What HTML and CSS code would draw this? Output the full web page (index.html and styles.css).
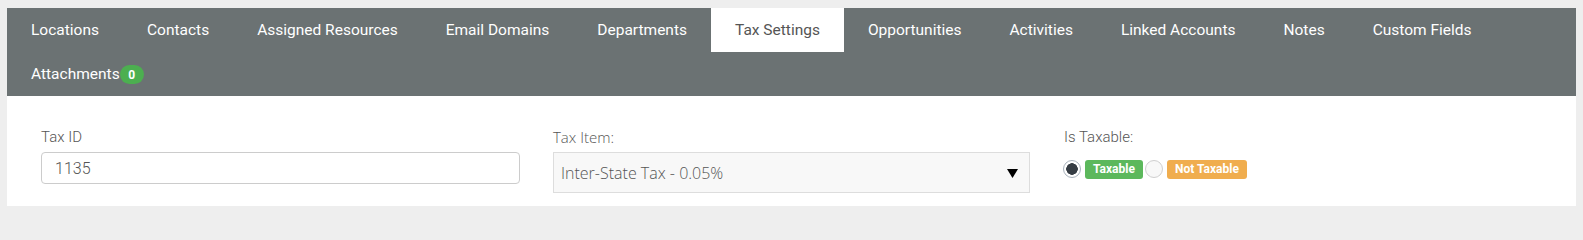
FILE: index.html
```html
<!DOCTYPE html>
<html lang="en">
<head>
<meta charset="utf-8">
<title>Tax Settings</title>
<link rel="stylesheet" href="styles.css">
</head>
<body>
<div class="panel">
  <nav class="tabs">
    <a class="tab">Locations</a>
    <a class="tab">Contacts</a>
    <a class="tab">Assigned Resources</a>
    <a class="tab">Email Domains</a>
    <a class="tab">Departments</a>
    <a class="tab active">Tax Settings</a>
    <a class="tab">Opportunities</a>
    <a class="tab">Activities</a>
    <a class="tab">Linked Accounts</a>
    <a class="tab">Notes</a>
    <a class="tab">Custom Fields</a>
    <a class="tab">Attachments<span class="badge">0</span></a>
  </nav>
  <div class="body">
    <div class="field">
      <label class="label">Tax ID</label>
      <input class="input" type="text" value="1135">
    </div>
    <div class="field">
      <label class="label label-os">Tax Item:</label>
      <div class="select">
        <span class="select-text">Inter-State Tax - 0.05%</span>
        <svg class="caret" width="11" height="9" viewBox="0 0 11 9"><polygon points="0,0 11,0 5.5,9" fill="#000"/></svg>
      </div>
    </div>
    <div class="field">
      <label class="label">Is Taxable:</label>
      <div class="radios">
        <input class="radio" type="radio" name="tax" checked>
        <span class="tag tag-green">Taxable</span>
        <input class="radio" type="radio" name="tax">
        <span class="tag tag-orange">Not Taxable</span>
      </div>
    </div>
  </div>
</div>
</body>
</html>
```
FILE: styles.css
```css
html {
  margin: 0;
  padding: 0;
  height: 100%;
  overflow: hidden;
  background: #eeeeee;
}
body {
  margin: 0;
  background: #eeeeee;
  padding: 8px 7px 9px 7px;
  font-family: Roboto, "Liberation Sans", sans-serif;
}
.panel {
  background: #ffffff;
}
.tabs {
  display: flex;
  flex-wrap: wrap;
  background: #6b7273;
}
.tab {
  display: inline-flex;
  align-items: center;
  height: 44px;
  padding: 0 24px;
  font-size: 15.5px;
  color: #ffffff;
  cursor: pointer;
  white-space: nowrap;
}
.tab.active {
  background: #ffffff;
  color: #555555;
}
.badge {
  display: inline-flex;
  align-items: center;
  justify-content: center;
  width: 24px;
  height: 19px;
  border-radius: 10px;
  background: #4caf50;
  color: #ffffff;
  font-size: 12px;
  font-weight: 700;
  margin-top: 1px;
}
.body {
  display: grid;
  grid-template-columns: 478px 477px 478px;
  column-gap: 34px;
  padding: 31px 33px 13px 34px;
  align-items: start;
}
.field {
  display: flex;
  flex-direction: column;
}
.label {
  font-size: 15px;
  font-weight: 300;
  line-height: 20px;
  color: #555555;
  margin-bottom: 5px;
}
.label-os {
  font-family: "Open Sans", Roboto, sans-serif;
}
.input {
  box-sizing: border-box;
  width: 479px;
  height: 32px;
  margin: 0;
  padding: 0 13px;
  border: 1px solid #cccccc;
  border-radius: 4px;
  font-family: Roboto, sans-serif;
  font-size: 16px;
  font-weight: 300;
  color: #555555;
  outline: none;
}
.select {
  box-sizing: border-box;
  display: flex;
  align-items: center;
  justify-content: space-between;
  height: 41px;
  padding: 0 11px 0 7px;
  background: #f8f8f8;
  border: 1px solid #dddddd;
}
.select-text {
  font-family: "Open Sans", sans-serif;
  font-size: 16px;
  font-weight: 300;
  color: #555555;
}
.caret {
  display: block;
  margin-top: 1px;
}
.radios {
  display: flex;
  align-items: center;
  height: 20px;
  margin-top: 7px;
}
.radio {
  -webkit-appearance: none;
  appearance: none;
  box-sizing: border-box;
  width: 18px;
  height: 18px;
  margin: 0 4px 0 -1px;
  border-radius: 50%;
  border: 1px solid #cfcfcf;
  background: #f8f8f8;
}
.radio:checked {
  border-color: #a8b2bc;
  background: radial-gradient(circle, #363d44 0, #363d44 5.5px, #ffffff 6px);
}
.tag {
  display: inline-flex;
  align-items: center;
  justify-content: center;
  height: 19px;
  padding: 0 8px;
  border-radius: 3px;
  color: #ffffff;
  font-size: 12px;
  font-weight: 700;
  box-sizing: border-box;
}
.tag-green {
  background: #5cb85c;
  width: 58px;
  margin-right: 3px;
}
.tag-orange {
  background: #f0ad4e;
  width: 80px;
}
```
